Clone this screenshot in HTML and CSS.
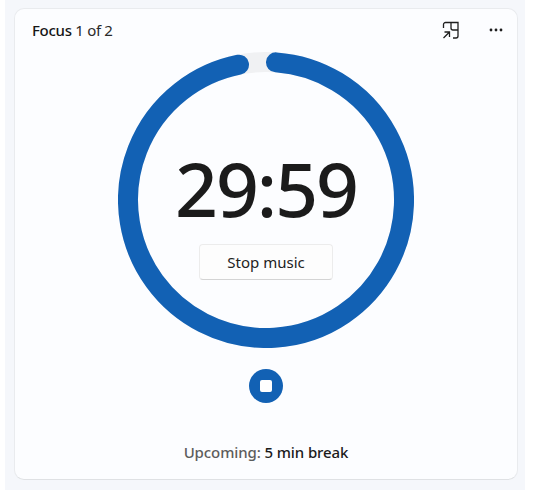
FILE: index.html
```html
<!DOCTYPE html>
<html lang="en">
<head>
<meta charset="utf-8">
<title>Focus</title>
<link rel="stylesheet" href="styles.css">
</head>
<body>
<div class="panel">
  <main class="card">
    <header class="header">
      <div class="title"><span class="title-strong">Focus</span> 1 of 2</div>
      <div class="actions">
        <svg class="icon-compact" width="18" height="18" viewBox="0 0 18 18" fill="none" stroke="#1f1f1f" stroke-width="1.300">
          <path d="M1.500 7V3.500a2 2 0 0 1 2-2h12.500V15a2 2 0 0 1-2 2h-3"/>
          <path d="M9 1.500V7a2 2 0 0 0 2 2h5"/>
          <path d="M1.500 17 7 11.500M2.500 11h5v5"/>
        </svg>
        <svg class="icon-more" width="14" height="4" viewBox="0 0 14 4" fill="#1f1f1f">
          <circle cx="2" cy="2" r="1.400"/><circle cx="7" cy="2" r="1.400"/><circle cx="12" cy="2" r="1.400"/>
        </svg>
      </div>
    </header>
    <section class="timer">
      <svg class="ring" width="296" height="296" viewBox="0 0 296 296" fill="none">
        <circle cx="148" cy="148" r="138" stroke="#f0f1f3" stroke-width="20"/>
        <path d="M121 12.670A138 138 0 1 0 158 10.360" stroke="#1261b4" stroke-width="20" stroke-linecap="round"/>
      </svg>
      <div class="timer-center">
        <div class="time">29:59</div>
        <button class="music-btn">Stop music</button>
      </div>
    </section>
    <button class="stop-btn" aria-label="Stop"><span class="stop-square"></span></button>
    <footer class="upcoming"><span class="upcoming-label">Upcoming:</span> <span class="upcoming-value">5 min break</span></footer>
  </main>
</div>
</body>
</html>
```

FILE: styles.css
```css
html, body {
  margin: 0;
  padding: 0;
  background: #ffffff;
}
body {
  width: 540px;
  height: 497px;
  overflow: hidden;
  font-family: "Noto Sans", "Open Sans", sans-serif;
}
.panel {
  box-sizing: border-box;
  width: 520px;
  height: 490px;
  margin-left: 5px;
  padding: 8px 7px 10px 9px;
  background: #f5f7fb;
}
.card {
  box-sizing: border-box;
  height: 472px;
  display: flex;
  flex-direction: column;
  align-items: center;
  background: #fcfdff;
  border: 1px solid #e9ebee;
  border-bottom-color: #dfe1e4;
  border-radius: 10px;
}
.header {
  align-self: stretch;
  height: 42px;
  margin-bottom: 1px;
  display: flex;
  justify-content: space-between;
  align-items: center;
  padding: 0 14px 0 17px;
}
.title {
  font-size: 15px;
  color: #2a2a2a;
  letter-spacing: -0.3px;
}
.title-strong {
  font-weight: 500;
  color: #161616;
}
.actions {
  display: flex;
  align-items: center;
  gap: 29px;
}
.timer {
  width: 296px;
  height: 296px;
  display: grid;
}
.ring, .timer-center {
  grid-area: 1 / 1;
}
.timer-center {
  display: flex;
  flex-direction: column;
  align-items: center;
  padding-top: 86px;
}
.time {
  font-size: 75px;
  font-weight: 500;
  letter-spacing: -2px;
  line-height: 100px;
  height: 100px;
  color: #1b1b1b;
}
.music-btn {
  box-sizing: border-box;
  width: 134px;
  height: 36px;
  margin-top: 6px;
  background: #fdfdfd;
  border: 1px solid #ececec;
  border-bottom-color: #d4d4d4;
  border-radius: 4px;
  font: 15px "Noto Sans", "Open Sans", sans-serif;
  color: #222222;
}
.stop-btn {
  width: 34px;
  height: 34px;
  margin-top: 21px;
  padding: 0;
  border: 0;
  border-radius: 50%;
  background: #1261b4;
  display: flex;
  align-items: center;
  justify-content: center;
}
.stop-square {
  width: 12px;
  height: 12px;
  border-radius: 2px;
  background: #ffffff;
}
.upcoming {
  margin-top: 39px;
  font-size: 15px;
  line-height: 20px;
  letter-spacing: -0.1px;
}
.upcoming-label {
  color: #5c5c5c;
  font-weight: 500;
}
.upcoming-value {
  color: #1b1b1b;
  font-weight: 500;
}
```
